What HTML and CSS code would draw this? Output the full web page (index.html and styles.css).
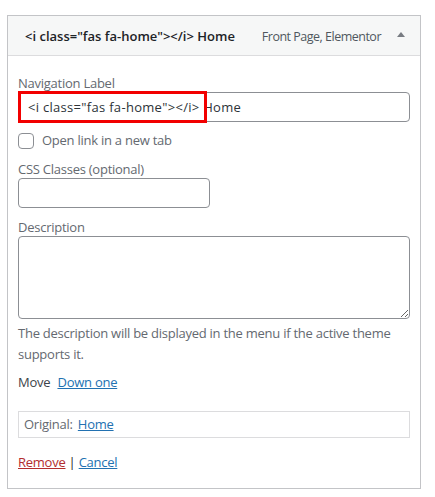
FILE: index.html
```html
<!DOCTYPE html>
<html>
<head>
    <title>Menu item</title>
    <meta charset="UTF-8">
    <link rel="stylesheet" href="styles.css">
</head>

<body>
    <div class="menu-item">
        <div class="item-bar">
            <span class="item-title">&lt;i class="fas fa-home"&gt;&lt;/i&gt; Home</span>
            <span class="item-type">Front Page, Elementor</span>
            <span class="item-toggle"></span>
        </div>

        <div class="item-settings">
            <div class="field field-title">
                <label class="field-label" for="edit-title">Navigation Label</label>
                <div class="highlight-wrap">
                    <input type="text" id="edit-title" class="text-wide" value='&lt;i class="fas fa-home"&gt;&lt;/i&gt; Home'>
                    <span class="highlight"></span>
                </div>
            </div>

            <div class="field field-check">
                <input type="checkbox" id="edit-target" class="checkbox">
                <label for="edit-target">Open link in a new tab</label>
            </div>

            <div class="field field-classes">
                <label class="field-label" for="edit-classes">CSS Classes (optional)</label>
                <input type="text" id="edit-classes" class="text-small">
            </div>

            <div class="field field-description">
                <label class="field-label" for="edit-description">Description</label>
                <textarea id="edit-description" class="text-wide" rows="3"></textarea>
                <p class="description">The description will be displayed in the menu if the active theme supports it.</p>
            </div>

            <div class="field-move">
                <span>Move</span>
                <a href="#" class="link">Down one</a>
            </div>

            <div class="original">
                Original: <a href="#" class="link">Home</a>
            </div>

            <div class="actions">
                <a href="#" class="link-delete">Remove</a> | <a href="#" class="link">Cancel</a>
            </div>
        </div>
    </div>
</body>
</html>
```

FILE: styles.css
```css
html { margin: 0; padding: 0; border: 0; }
body { margin: 0; background: #fff; font-family: 'Open Sans', sans-serif; font-size: 13px; line-height: 1.5; letter-spacing: -0.25px; color: #3c434a; }
a { color: #2271b1; }

.menu-item { margin: 15px 14px 0 7px; width: 412px; border: 1px solid #c3c4c7; }

.item-bar { display: flex; align-items: center; height: 40px; padding: 3px 15px 0 17px; box-sizing: border-box; background: #f6f7f7; border-bottom: 1px solid #dcdcde; }
.item-title { flex: 1; font-weight: 600; letter-spacing: 0; color: #1d2327; }
.item-type { font-size: 12.5px; letter-spacing: -0.5px; color: #50575e; margin-right: 16px; }
.item-toggle { width: 0; height: 0; border-left: 4px solid transparent; border-right: 4px solid transparent; border-bottom: 5px solid #787c82; margin-top: -6px; }

.item-settings { padding: 18px 10px 15px 10px; }

.field-label { display: block; line-height: 18px; color: #646970; }
.field-check { margin-top: 9px; }
.field-classes { margin-top: 9px; }
.field-description { margin-top: 10px; }

input, textarea { font-family: inherit; font-size: 13px; letter-spacing: -0.25px; color: #2c3338; border: 1px solid #8c8f94; border-radius: 4px; background: #fff; box-sizing: border-box; margin: 0; }
.text-wide { display: block; width: 100%; height: 30px; padding: 0 8px 0 9px; }
#edit-title { letter-spacing: 0.3px; }
textarea.text-wide { height: 83px; resize: vertical; }
.text-small { display: block; width: 192px; height: 30px; }

.highlight-wrap { position: relative; }
.highlight { position: absolute; left: 0; top: -1px; width: 183px; height: 26px; border: 3px solid #f20000; }

.field-check { display: flex; align-items: center; gap: 8px; height: 20px; }
.checkbox { -webkit-appearance: none; appearance: none; width: 16px; height: 16px; border: 1px solid #8c8f94; border-radius: 4px; }
.field-check label { color: #646970; }

.description { margin: 4px 0 0; line-height: 21px; color: #646970; }

.field-move { margin-top: 8px; color: #3c434a; }
.field-move span { margin-right: 4px; }

.original { margin-top: 18px; padding: 3px 5px; border: 1px solid #dcdcde; color: #646970; }
.original a { margin-left: 2px; }

.actions { margin-top: 15px; color: #1d2327; }
.link-delete { color: #b32d2e; }
```
